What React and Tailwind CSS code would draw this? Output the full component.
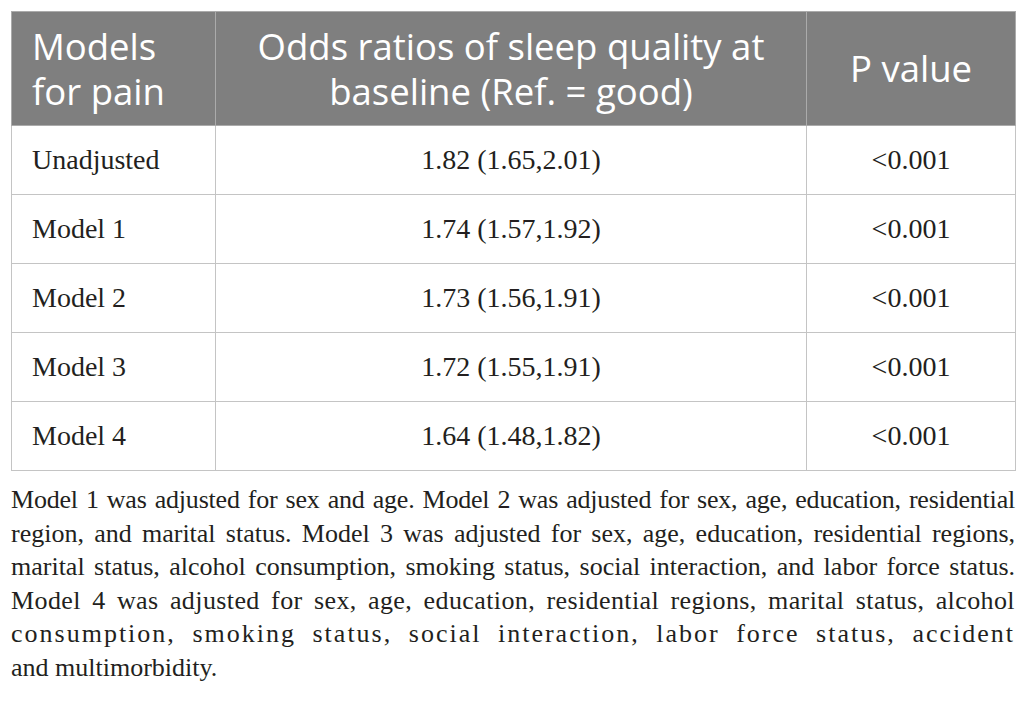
const rows = [
  ["Unadjusted", "1.82 (1.65,2.01)", "<0.001"],
  ["Model 1", "1.74 (1.57,1.92)", "<0.001"],
  ["Model 2", "1.73 (1.56,1.91)", "<0.001"],
  ["Model 3", "1.72 (1.55,1.91)", "<0.001"],
  ["Model 4", "1.64 (1.48,1.82)", "<0.001"],
];

const notes = [
  { text: "Model 1 was adjusted for sex and age. Model 2 was adjusted for sex, age, education, residential", cls: "tracking-[-0.2px]" },
  { text: "region, and marital status. Model 3 was adjusted for sex, age, education, residential regions,", cls: "" },
  { text: "marital status, alcohol consumption, smoking status, social interaction, and labor force status.", cls: "" },
  { text: "Model 4 was adjusted for sex, age, education, residential regions, marital status, alcohol", cls: "tracking-[0.4px]" },
  { text: "consumption, smoking status, social interaction, labor force status, accident", cls: "tracking-[2px]" },
];

export default function App() {
  return (
    <div className="w-[1026px] h-[702px] bg-white overflow-hidden pt-[11px] px-[11px]">
      <table className="w-[1004px] table-fixed border-collapse">
        <colgroup>
          <col className="w-[204px]" />
          <col className="w-[591px]" />
          <col className="w-[209px]" />
        </colgroup>
        <thead>
          <tr className="h-[114px] bg-[#7f7f7f] text-white font-['Open_Sans',sans-serif] text-[36.5px] leading-[45px]">
            <th className="border border-[#ababab] font-normal text-left align-middle pl-[20px]">
              Models
              <br />
              for pain
            </th>
            <th className="border border-[#ababab] font-normal text-center align-middle">
              Odds ratios of sleep quality at
              <br />
              baseline (Ref. = good)
            </th>
            <th className="border border-[#ababab] font-normal text-center align-middle">P value</th>
          </tr>
        </thead>
        <tbody className="font-['Liberation_Serif',serif] text-[28px] text-[#231f20]">
          {rows.map((r) => (
            <tr key={r[0]} className="h-[69px]">
              <td className="border border-[#c4c4c4] pl-[20px] align-middle">{r[0]}</td>
              <td className="border border-[#c4c4c4] text-center align-middle">{r[1]}</td>
              <td className="border border-[#c4c4c4] text-center align-middle">{r[2]}</td>
            </tr>
          ))}
        </tbody>
      </table>
      <div className="mt-[12px] w-[1004px] font-['Liberation_Serif',serif] text-[26px] leading-[33.6px] text-[#231f20]">
        {notes.map((n) => (
          <div key={n.text} className={`text-justify [text-align-last:justify] whitespace-nowrap ${n.cls}`}>
            {n.text}
          </div>
        ))}
        <div>and multimorbidity.</div>
      </div>
    </div>
  );
}
